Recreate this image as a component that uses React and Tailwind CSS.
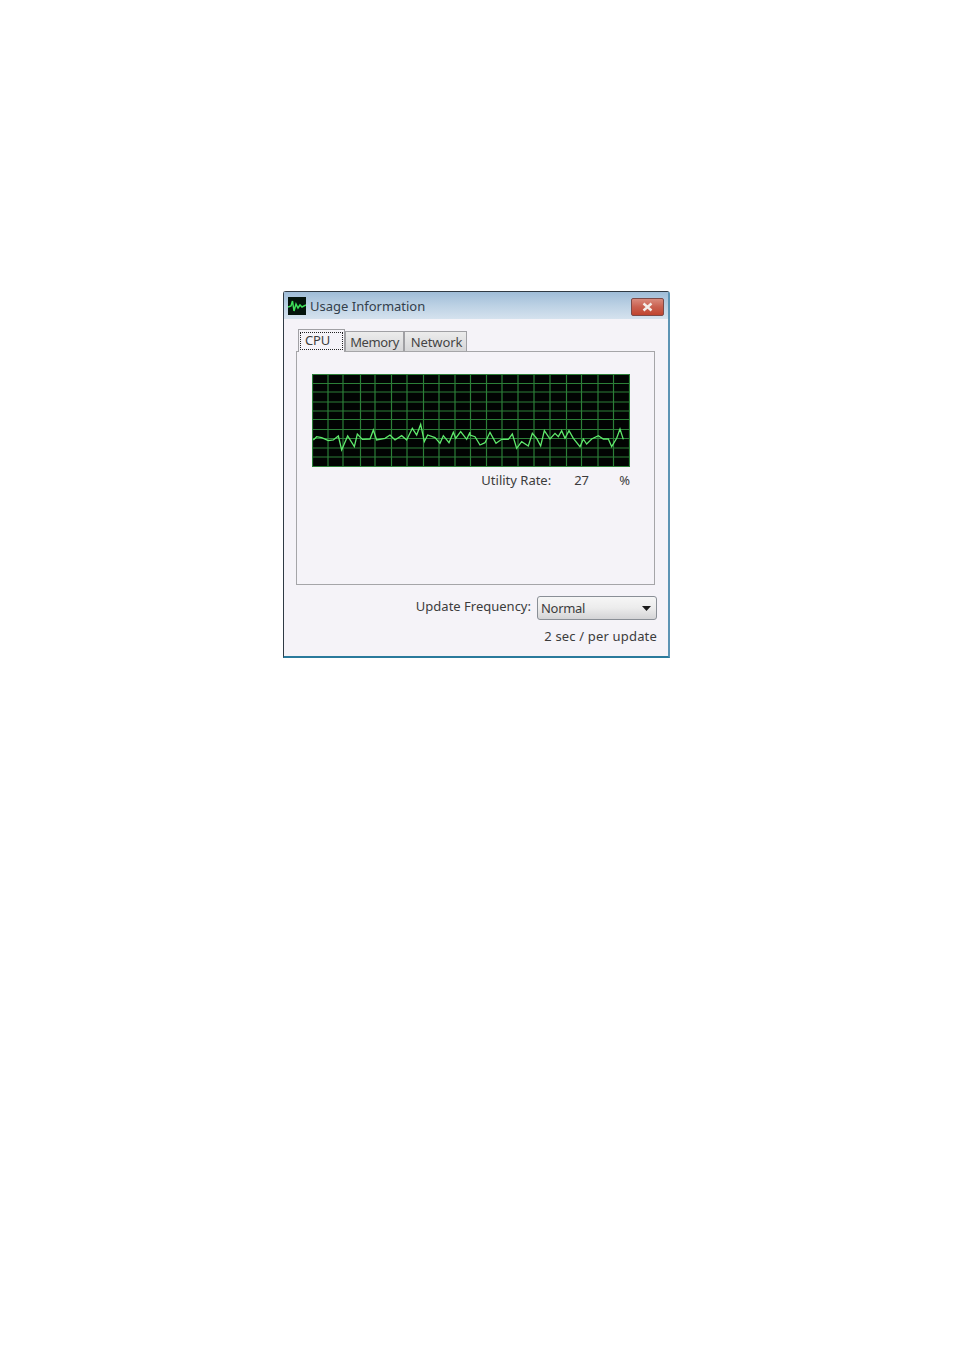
const left = [[25,210],[35,200],[50,203],[70,212],[85,210],[100,198],[110,240],[128,198],[148,230],[157,192],[172,208],[195,207],[205,180],[215,210],[240,205],[255,195],[270,210],[290,197],[305,210],[322,175],[335,195],[347,163],[358,215],[368,195],[390,203],[405,220],[415,197],[432,218],[445,187],[452,205],[467,185],[485,208],[495,187]];
const right = [[0,195],[15,200],[30,225],[45,218],[60,187],[78,220],[95,208],[115,208],[127,192],[140,235],[155,215],[175,228],[187,190],[200,205],[212,228],[223,182],[240,207],[255,190],[265,200],[275,182],[285,205],[297,182],[310,205],[330,230],[340,207],[350,222],[365,207],[385,197],[400,207],[415,207],[425,230],[440,205],[450,177],[460,208]];
const points = [
  ...left.map(([x, y]) => [x / 3 + 305 - 312, y / 3 + 370 - 374]),
  ...right.map(([x, y]) => [x / 3 + 470 - 312, y / 3 + 370 - 374]),
].map((p) => p.join(",")).join(" ");
const vLines = [0.5,16,31,48.5,63,79.5,95,111.5,127,143,158.5,174.5,190,206,222,238,254.5,269.5,286,301.5,317.5];
const hLines = [0.5,9.5,18,28,37,45.5,55.5,64.5,74,83,92.5];

function TitleIcon() {
  return (
    <svg width="18" height="18" viewBox="0 0 18 18" className="shrink-0 -mt-[1px]">
      <rect width="18" height="18" fill="#04140c" />
      <polyline points="0,10 3,9 4.5,4 6,14 8,7 10,11 12,8 14,10 18,8" fill="none" stroke="#3fe05a" strokeWidth="1.5" />
    </svg>
  );
}

function Tab({ children, className }) {
  return (
    <div className={`flex items-center justify-center border border-b-0 border-[#a0a0a4] bg-gradient-to-b from-[#ececec] to-[#d6d6d8] pt-[1px] text-[#444] ${className}`}>
      {children}
    </div>
  );
}

export default function App() {
  return (
    <div className="min-h-[1354px] bg-white pt-[291px] pl-[283px] font-['Noto_Sans','Liberation_Sans',sans-serif] text-[13px] leading-none text-[#3c3c3c]">
      <div className="flex h-[367px] w-[387px] flex-col rounded-t-[3px] border border-b-2 border-r-2 border-[#2f3a44] border-b-[#2a7a9c] border-r-[#5d94b4] bg-[#f5f3f8]">
        <div className="flex h-[27px] shrink-0 items-center bg-gradient-to-b from-[#9fbdd8] via-[#bcd1e4] to-[#d5e2ee] pt-[2px] pl-[4px] pr-[4px]">
          <TitleIcon />
          <span className="ml-[4px] text-[13px] text-[#33404c]">Usage Information</span>
          <div className="ml-auto flex h-[18px] w-[33px] items-center justify-center rounded-[2px] border border-[#7d4a48] bg-gradient-to-b from-[#d98a7c] via-[#c9604f] to-[#c0442f]">
            <svg width="13" height="10" viewBox="0 0 13 10">
              <path d="M2.5 1.5 L10.5 8.5 M10.5 1.5 L2.5 8.5" stroke="#f4eeea" strokeWidth="2.4" />
            </svg>
          </div>
        </div>

        <div className="flex flex-1 flex-col pl-[12px] pr-[11px] pt-[8px]">
          <div className="flex h-[24px] items-end">
            <div className="relative z-10 -mb-px ml-[2px] flex h-[23px] w-[47px] items-center justify-center border border-b-0 border-[#a0a0a4] bg-[#f5f3f8] pb-[1px] text-[#3c3c3c]">
              <span className="h-[18px] w-[43px] border border-dotted border-[#222] pl-[4px] pt-[1px] tracking-[-0.2px]">CPU</span>
            </div>
            <Tab className="h-[20px] w-[59px] tracking-[-0.4px]">Memory</Tab>
            <Tab className="h-[20px] w-[63px] pl-[2px] tracking-[-0.1px]">Network</Tab>
          </div>

          <div className="h-[234px] w-[359px] border border-[#a5a5a8] px-[15px] pt-[22px]">
            <svg width="318" height="93" viewBox="0 0 318 93" className="block blur-[0.4px]">
              <rect width="318" height="93" fill="#020403" />
              {vLines.map((x) => (
                <line key={x} x1={x} x2={x} y1="0" y2="93" stroke="#2c7f38" strokeWidth="1.2" />
              ))}
              {hLines.map((y) => (
                <line key={y} x1="0" x2="318" y1={y} y2={y} stroke="#2c7f38" strokeWidth="1.2" />
              ))}
              <polyline points={points} fill="none" stroke="#5fe96c" strokeWidth="1.3" />
            </svg>
            <div className="mt-[7px] flex w-[318px] items-center justify-end">
              <span>Utility Rate:</span>
              <span className="ml-[23px] w-[16px]">27</span>
              <span className="ml-[29px]">%</span>
            </div>
          </div>

          <div className="mt-[11px] flex items-center justify-end">
            <span className="mb-[3px]">Update Frequency:</span>
            <div className="ml-[6px] flex h-[24px] w-[120px] items-center rounded-[3px] border border-[#8a8f96] bg-gradient-to-b from-[#f6f6f6] via-[#ececec] to-[#d4d4d6] pl-[3px] pr-[4px]">
              <span className="tracking-[-0.3px]">Normal</span>
              <svg width="9" height="5" viewBox="0 0 9 5" className="ml-auto mr-[1px]">
                <path d="M0 0 H9 L4.5 5 Z" fill="#1a1a1a" />
              </svg>
            </div>
          </div>
          <div className="mt-[10px] text-right tracking-[0.17px]">2 sec / per update</div>
        </div>
      </div>
    </div>
  );
}
